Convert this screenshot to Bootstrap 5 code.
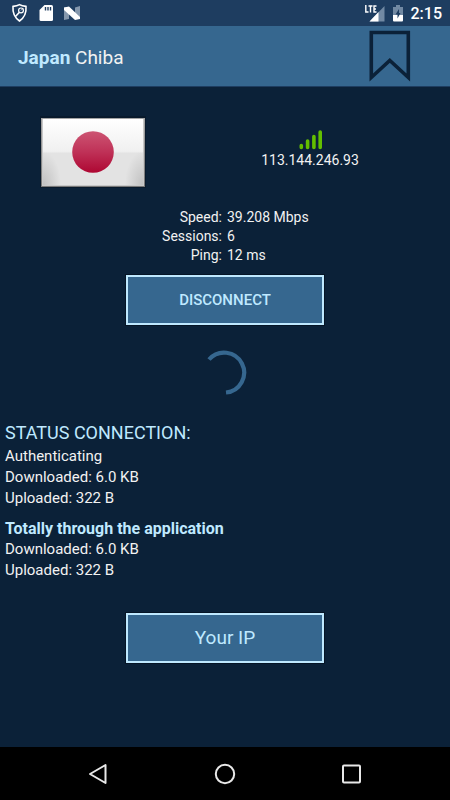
<!DOCTYPE html>
<html lang="en">
<head>
<meta charset="utf-8">
<meta name="viewport" content="width=device-width, initial-scale=1">
<title>Japan Chiba</title>
<link href="https://cdn.jsdelivr.net/npm/bootstrap@5.3.0/dist/css/bootstrap.min.css" rel="stylesheet">
<style>
  body { font-family: Roboto, "Liberation Sans", sans-serif; background: #0b2138; color: #f2f2f2; font-size: 15px; line-height: 19px; }
  svg { display: block; flex: none; }
  .status-bar { background: #1e3d60; height: 26px; padding: 0 8px 0 10px; }
  .clock { font-size: 16px; font-weight: 500; line-height: 26px; padding-top: 2px; color: #fff; }
  .title-bar { background: #36678f; height: 61px; padding: 0 38px 0 18px; border-bottom: 1px solid #1e3d60; }
  .title-bar h1 { font-size: 19px; font-weight: 400; line-height: 24px; padding-top: 3px; color: #f2f2f2; }
  .accent, .title-bar strong { color: #bfe9ff; }
  .icon-btn { background: none; border: 0; }
  .server { padding: 29px 0 20px; }
  .address { font-size: 14px; line-height: 18px; padding-bottom: 6px; }
  .stats { font-size: 14px; }
  .stats td { padding: 0 0 0 2px; }
  .stats th { padding: 0 3px 0 0; font-weight: 400; text-align: right; width: 50%; }
  .action { width: 44%; height: 50px; background: #36678f; border: 2px solid #bfe9ff; border-radius: 0; color: #bfe9ff; font-size: 15px; font-weight: 500; box-shadow: 0 0 0 1px #061526; }
  .action:hover { background: #36678f; color: #bfe9ff; border-color: #bfe9ff; }
  .disconnect { margin-top: 10px; }
  .action-lg { font-size: 19px; font-weight: 400; margin-top: 32px; }
  .progress-ring { padding: 25px 0 26px; }
  .report { padding: 0 5px; line-height: 21px; }
  .report h2 { font-size: 18px; font-weight: 400; line-height: 22px; margin: 0 0 2px; }
  .report h3 { font-size: 16px; font-weight: 700; line-height: 21px; margin: 9px 0 0; }
  .nav-keys { background: #000; height: 53px; padding: 0 34px; }
</style>
<script src="https://cdn.jsdelivr.net/npm/bootstrap@5.3.0/dist/js/bootstrap.bundle.min.js"></script>
</head>
<body class="d-flex flex-column min-vh-100">
<div class="status-bar d-flex align-items-center justify-content-between">
  <div class="d-flex align-items-center gap-2">
    <svg width="20" height="20" viewBox="0 0 20 20" fill="none" stroke="#fff" aria-hidden="true">
      <path d="M9.500 1.600Q12 3 16 3.400Q16.800 13 9.500 18Q2.200 13 3 3.400Q7 3 9.500 1.600Z" stroke-width="1.600"/>
      <path d="M5.200 13.800L9.500 9.200" stroke-width="1.600"/><circle cx="11" cy="7.400" r="2.400" stroke-width="1.200"/><path d="M11 7.400l2-2" stroke-width=".8"/>
    </svg>
    <svg width="18" height="20" viewBox="0 0 18 20" aria-hidden="true">
      <path d="M6.500 2H13.500Q15 2 15 3.500V16.500Q15 18 13.500 18H3Q1.500 18 1.500 16.500V7Z" fill="#fff"/>
      <path d="M7.500 4v3.500M10 4v3.500M12.500 4v3.500" stroke="#1e3d60" stroke-width="1.400"/>
    </svg>
    <svg width="18" height="20" viewBox="0 0 18 20" aria-hidden="true">
      <path d="M0 4.500L5 4V16L0 17Z M16 3V16L11 15V4.500Z" fill="#8598ad"/>
      <path d="M0 4.500L5 3.500L16 14V16L11 17L0 7Z" fill="#fff"/>
    </svg>
  </div>
  <div class="d-flex align-items-center">
    <svg width="22" height="22" viewBox="0 0 22 22" aria-hidden="true">
      <path d="M19.500 4V19.500H4.500Z" fill="#7189a3"/><path d="M13.500 10V19.500H4.500Z" fill="#fff"/>
      <path d="M.800 3.500V10H3M3.500 4H7.500M5.500 4V10.500M11.500 4H9V10H11.500M9 7H11" stroke="#1e3d60" stroke-width="3" fill="none"/>
      <path d="M.800 3V10H3.500M3.500 4H7.500M5.500 4V10.500M11.500 4H9V10H11.500M9 7H11" stroke="#fff" stroke-width="1.400" fill="none"/>
    </svg>
    <svg class="ms-1" width="20" height="22" viewBox="0 0 20 22" aria-hidden="true">
      <path d="M5 3H9V5H12V14H2V5H5Z" fill="#7189a3"/><path d="M2 13H12V18.500Q12 19.500 11 19.500H3Q2 19.500 2 18.500Z" fill="#fff"/>
      <path d="M8 7L4.500 12.500H6.500V16.500L9.500 11H8Z" fill="#1e3d60"/>
    </svg>
    <span class="clock">2:15</span>
  </div>
</div>
<header class="title-bar d-flex align-items-center justify-content-between">
  <h1 class="m-0"><strong>Japan</strong> Chiba</h1>
  <button type="button" class="icon-btn p-0" aria-label="Bookmark">
    <svg width="44" height="54" viewBox="0 0 44 54" fill="none"><path d="M3.300 3.500H40.300V48.500L21.800 31.500L3.300 48.500Z" stroke="#0b2138" stroke-width="3.600"/></svg>
  </button>
</header>
<main class="flex-grow-1 d-flex flex-column">
  <section class="server d-flex align-items-center">
    <div class="flex-shrink-0 ps-4 ms-3">
      <svg width="106" height="72" viewBox="0 0 106 72" role="img" aria-label="Flag of Japan">
        <defs>
          <linearGradient id="paper" x2="0" y2="1"><stop stop-color="#fff"/><stop offset=".49" stop-color="#f0f0f0"/><stop offset=".52" stop-color="#e3e3e3"/><stop offset="1" stop-color="#e3e3e3"/></linearGradient>
          <linearGradient id="sun" x2="0" y2="1"><stop stop-color="#cd5573"/><stop offset=".5" stop-color="#bf3157"/><stop offset="1" stop-color="#ae0732"/></linearGradient>
          <linearGradient id="frame" x2="0" y2="1"><stop stop-color="#a5a5a5"/><stop offset="1" stop-color="#777"/></linearGradient>
          <radialGradient id="corner"><stop stop-color="#aaa" stop-opacity=".6"/><stop offset="1" stop-color="#aaa" stop-opacity="0"/></radialGradient>
        </defs>
        <rect width="106" height="72" fill="#091a2c"/>
        <rect x="1" y="2" width="104" height="69" fill="url(#frame)"/>
        <rect x="2" y="3" width="102" height="67" fill="#c8c8c8"/>
        <svg x="3" y="3" width="100" height="66" viewBox="3 3 100 66">
          <rect x="3" y="3" width="100" height="66" fill="url(#paper)"/>
          <ellipse cx="3" cy="69" rx="18" ry="34" fill="url(#corner)"/>
          <ellipse cx="103" cy="69" rx="18" ry="34" fill="url(#corner)"/>
        </svg>
        <circle cx="53" cy="36" r="20.800" fill="url(#sun)"/>
      </svg>
    </div>
    <div class="address flex-grow-1 d-flex flex-column align-items-center ps-4">
      <svg width="26" height="22" viewBox="0 0 26 22" stroke="#63bf00" stroke-width="3.600" stroke-linecap="round" role="img" aria-label="Signal strength"><path d="M4.300 16.500V18.500M10.600 12V18.500M16.900 7.500V18.500M23.200 3V18.500"/></svg>
      <span>113.144.246.93</span>
    </div>
  </section>
  <table class="stats w-100">
    <tbody>
      <tr><th scope="row">Speed:</th><td>39.208 Mbps</td></tr>
      <tr><th scope="row">Sessions:</th><td>6</td></tr>
      <tr><th scope="row">Ping:</th><td>12 ms</td></tr>
    </tbody>
  </table>
  <button type="button" class="btn action disconnect align-self-center">DISCONNECT</button>
  <div class="progress-ring d-flex justify-content-center" role="status" aria-label="Connecting">
    <svg width="46" height="46" viewBox="0 0 46 46" fill="none"><path d="M7 9.500A20 20 0 1 1 24 42.500" stroke="#36678f" stroke-width="4.200"/></svg>
  </div>
  <section class="report">
    <h2 class="accent">STATUS CONNECTION:</h2>
    <div>Authenticating</div>
    <div>Downloaded: 6.0 KB</div>
    <div>Uploaded: 322 B</div>
    <h3 class="accent">Totally through the application</h3>
    <div>Downloaded: 6.0 KB</div>
    <div>Uploaded: 322 B</div>
  </section>
  <button type="button" class="btn action action-lg align-self-center">Your IP</button>
</main>
<nav class="nav-keys d-flex align-items-center justify-content-around" aria-label="System">
  <button type="button" class="icon-btn p-0" aria-label="Back"><svg width="24" height="24" viewBox="0 0 24 24" fill="none" stroke="#e8e8e8" stroke-width="2" stroke-linejoin="round"><path d="M19.500 3V21L4 12Z"/></svg></button>
  <button type="button" class="icon-btn p-0" aria-label="Home"><svg width="24" height="24" viewBox="0 0 24 24" fill="none" stroke="#e8e8e8" stroke-width="2"><circle cx="12" cy="12" r="9.200"/></svg></button>
  <button type="button" class="icon-btn p-0" aria-label="Overview"><svg width="24" height="24" viewBox="0 0 24 24" fill="none" stroke="#e8e8e8" stroke-width="2"><rect x="3" y="3.500" width="17" height="17" rx="1"/></svg></button>
</nav>
</body>
</html>
